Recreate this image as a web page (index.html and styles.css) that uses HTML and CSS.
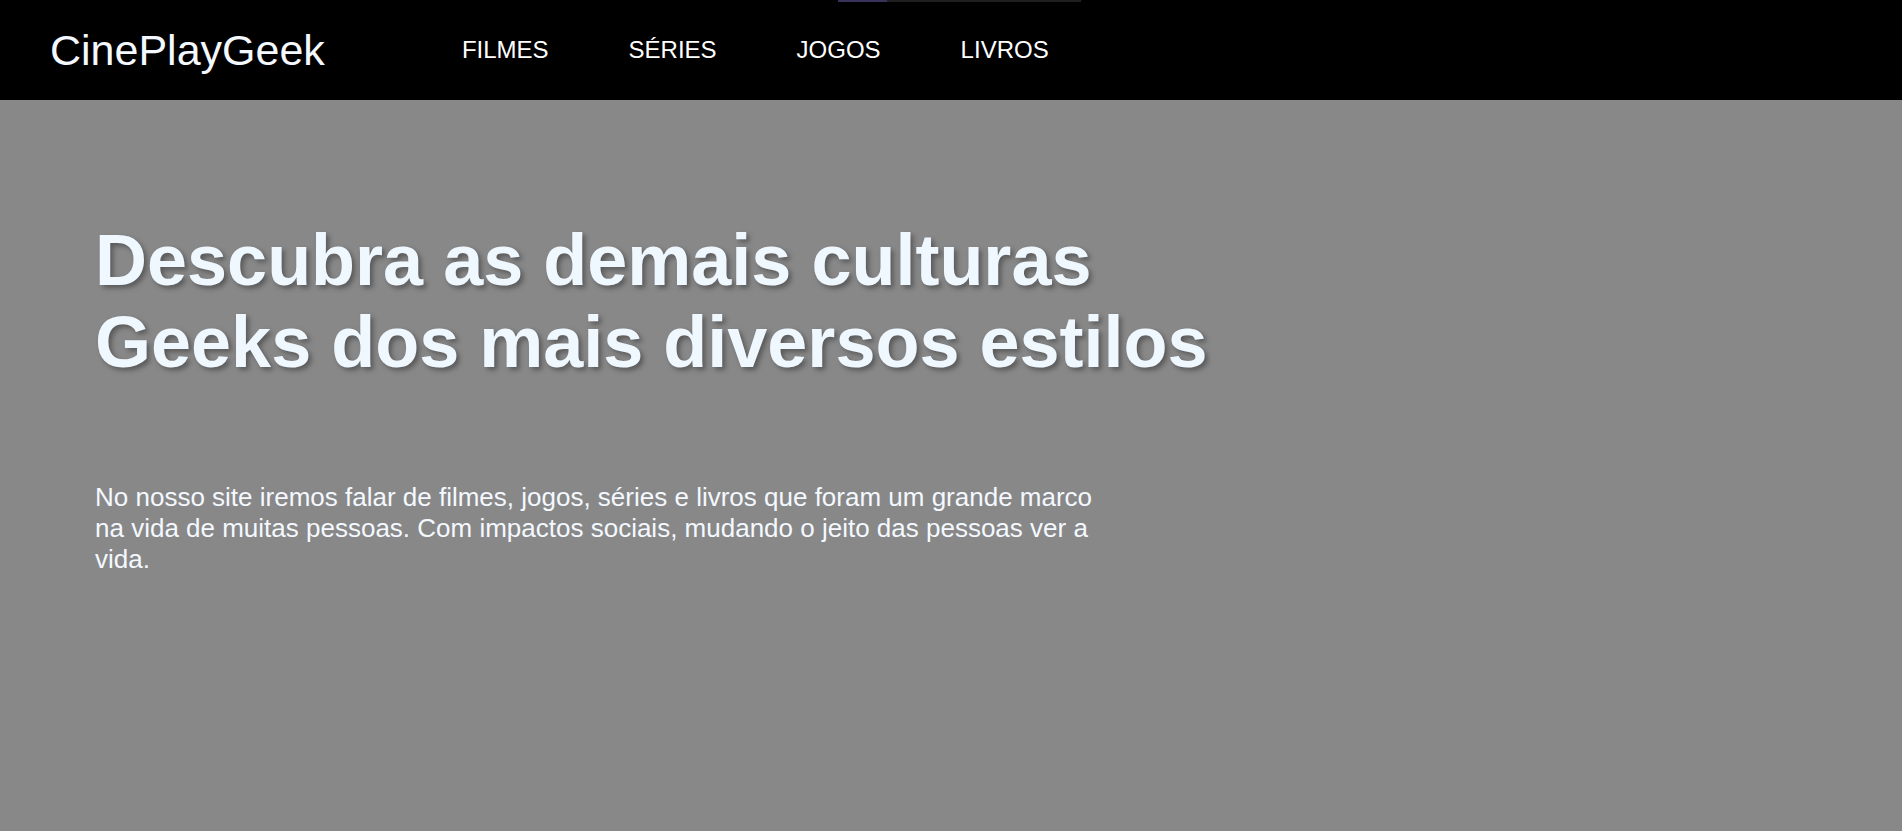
FILE: index.html
```html
<!DOCTYPE html>
<html lang="pt-BR">
<head>
<meta charset="utf-8">
<title>CinePlayGeek</title>
<link rel="stylesheet" href="styles.css">
</head>
<body>
<div class="topline"><span class="topline-a"></span><span class="topline-b"></span></div>
<header class="header">
  <a class="logo" href="#">CinePlayGeek</a>
  <nav class="nav">
    <a href="#">FILMES</a>
    <a href="#">SÉRIES</a>
    <a href="#">JOGOS</a>
    <a href="#">LIVROS</a>
  </nav>
</header>
<main class="hero">
  <h1 class="hero-title">Descubra as demais culturas Geeks dos mais diversos estilos</h1>
  <p class="hero-text">No nosso site iremos falar de filmes, jogos, séries e livros que foram um grande marco na vida de muitas pessoas. Com impactos sociais, mudando o jeito das pessoas ver a vida.</p>
</main>
</body>
</html>
```
FILE: styles.css
```css
html, body {
  margin: 0;
  padding: 0;
}
body {
  font-family: "Liberation Sans", Arial, sans-serif;
  background: #888888;
  min-height: 831px;
  overflow: hidden;
}
.topline {
  position: absolute;
  top: 0;
  left: 838px;
  display: flex;
  height: 2px;
  z-index: 2;
}
.topline-a {
  width: 49px;
  background: #37325a;
}
.topline-b {
  width: 194px;
  background: #1f1f22;
}
.header {
  height: 100px;
  background: #000;
  display: flex;
  align-items: center;
  padding: 0 50px;
  box-sizing: border-box;
}
.logo {
  color: #f4f8ff;
  font-size: 43px;
  text-decoration: none;
}
.nav {
  display: flex;
  gap: 80px;
  margin-left: 137px;
}
.nav a {
  color: #ffffff;
  font-size: 24px;
  text-decoration: none;
}
.hero {
  padding: 119px 95px 0;
}
.hero-title {
  margin: 0;
  width: 1160px;
  font-size: 72px;
  font-weight: bold;
  line-height: normal;
  color: #f0f8ff;
  text-shadow: 3px 3px 5px rgba(0, 0, 0, 0.35);
}
.hero-text {
  margin: 99px 0 0;
  width: 1010px;
  font-size: 26px;
  line-height: normal;
  color: #f4f8ff;
}
```
